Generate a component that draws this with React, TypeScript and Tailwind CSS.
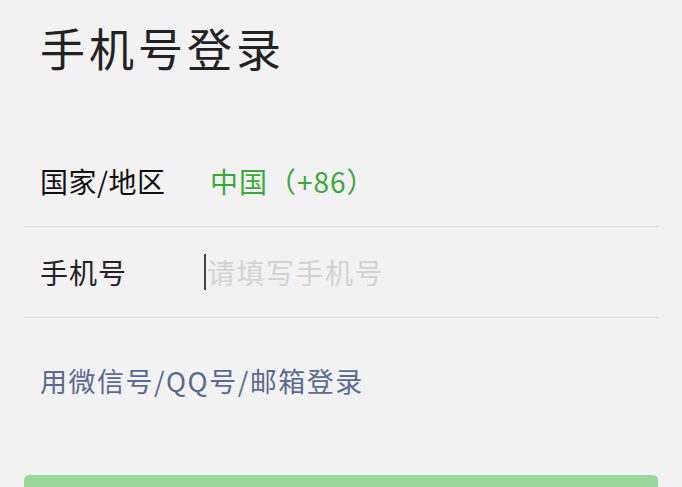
import React from "react";

export default function App() {
  const font = { fontFamily: '"Noto Sans CJK SC", "Noto Sans", sans-serif' };
  return (
    <div
      className="w-[682px] h-[487px] overflow-hidden bg-[#f2f2f2] px-6 flex flex-col"
      style={font}
    >
      <div className="h-[94px] flex items-center pl-4 shrink-0">
        <h1 className="text-[45px] leading-none tracking-[4px] text-[#222] font-normal">
          手机号登录
        </h1>
      </div>
      <div className="h-[41px] shrink-0" />
      <div className="h-[92px] shrink-0 flex items-center px-4 border-b border-[#dadada]">
        <div className="w-[170px] text-[28px] leading-none text-[#111] tracking-[0.5px]">国家/地区</div>
        <div className="text-[28px] leading-none text-[#3da73b] tracking-[1px]">中国（+86）</div>
      </div>
      <div className="h-[91px] shrink-0 flex items-center px-4 border-b border-[#dadada]">
        <div className="w-[164px] text-[28px] leading-none text-[#222] tracking-[1px]">手机号</div>
        <div className="flex items-center">
          <div className="w-[2px] h-[36px] bg-[#444]" />
          <span className="ml-[1px] text-[28px] leading-none text-[#d2d2d2] tracking-[1.5px]">
            请填写手机号
          </span>
        </div>
      </div>
      <div className="h-[124px] shrink-0 flex items-center pl-4">
        <span className="text-[27px] leading-none text-[#5a6a92] tracking-[1.5px]">用微信号/QQ号/邮箱登录</span>
      </div>
      <div className="h-[33px] shrink-0" />
      <div className="h-[50px] shrink-0 w-[634px] rounded-[5px] bg-[#9dd69b]" />
    </div>
  );
}
